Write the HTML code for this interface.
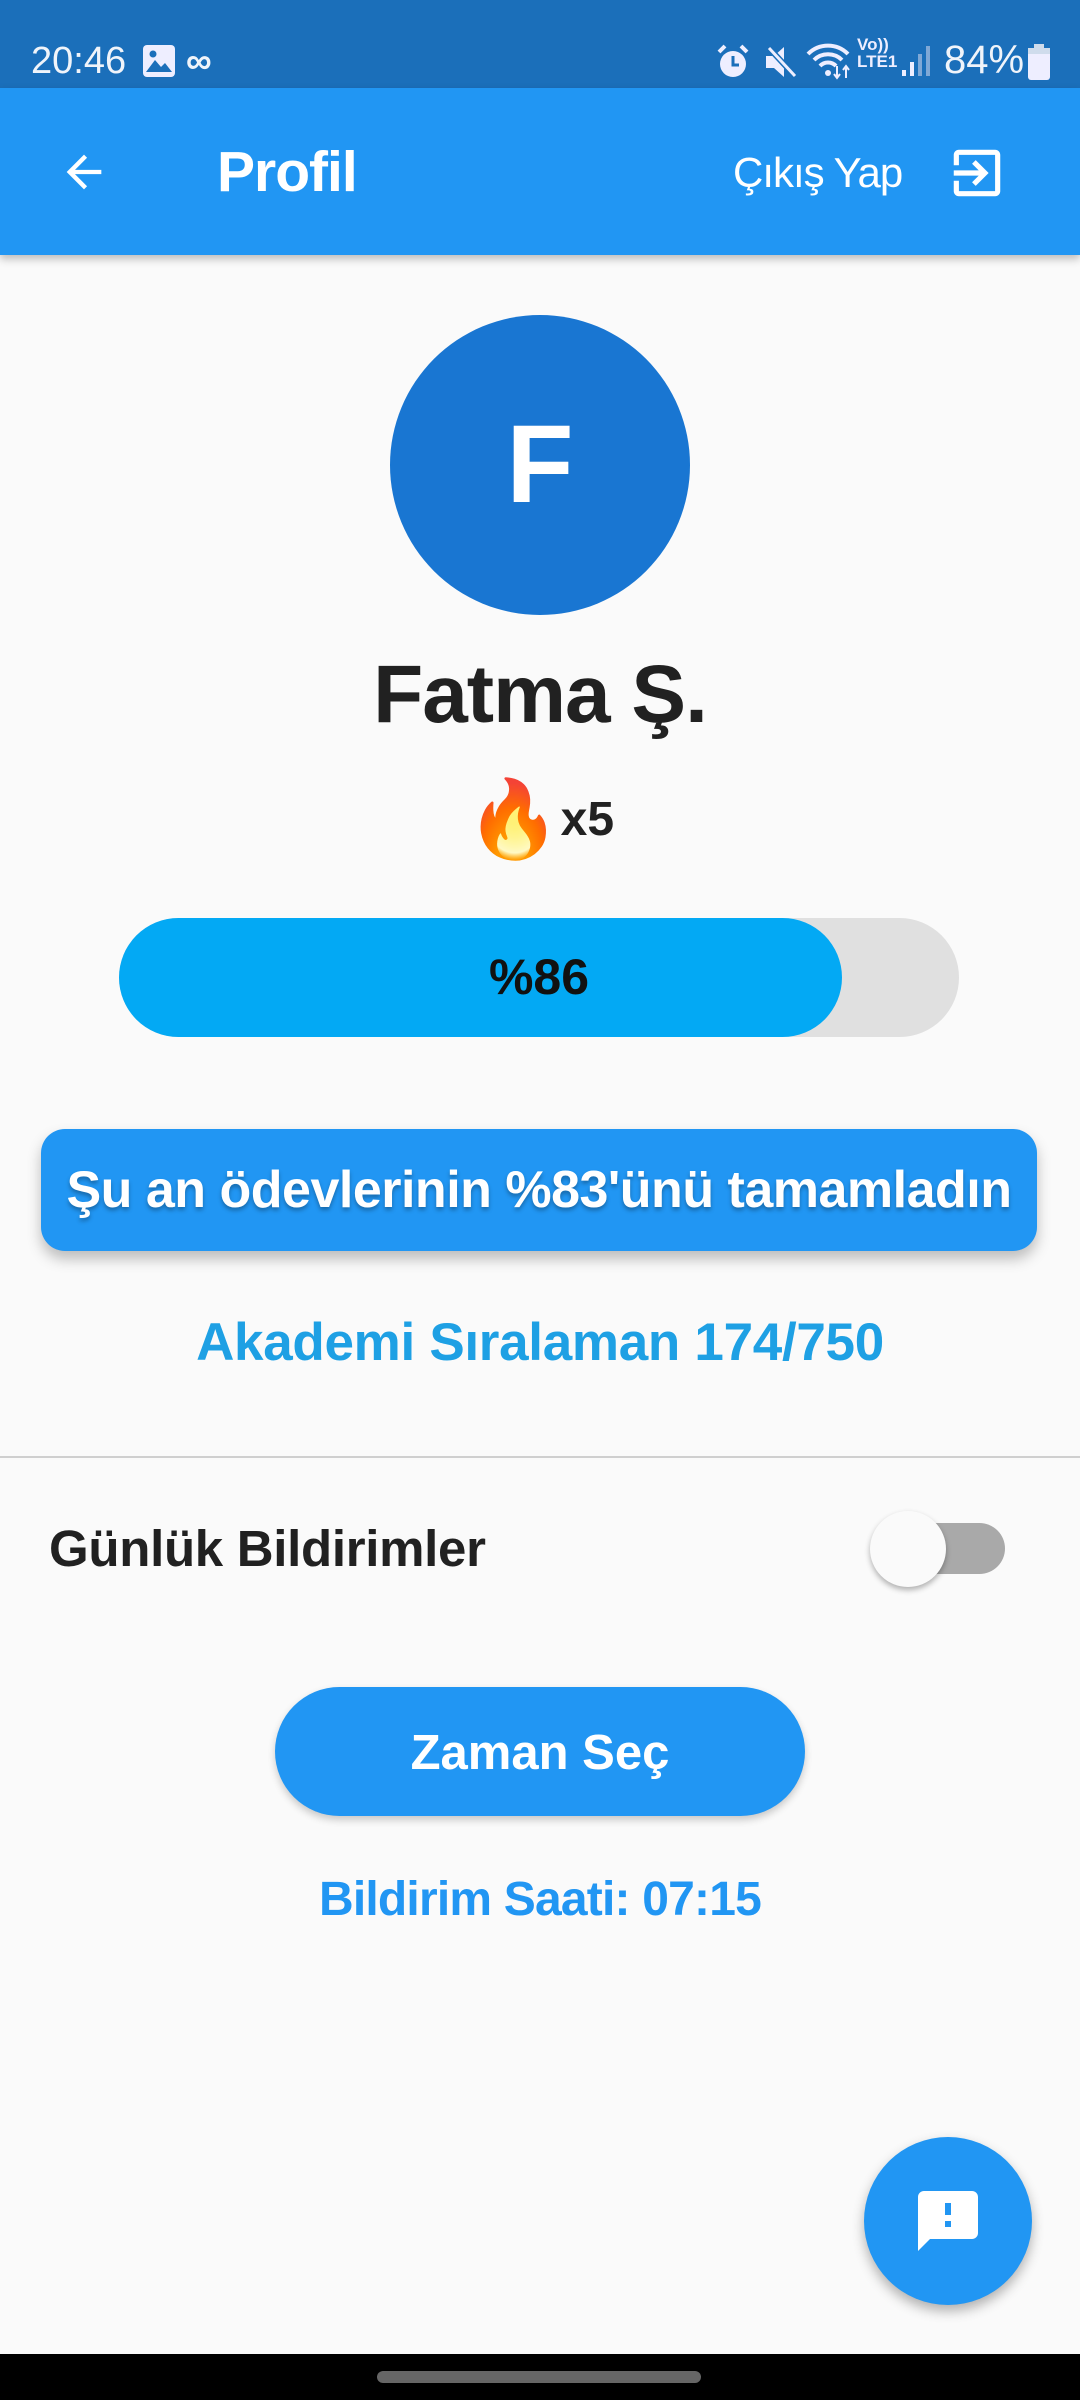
<!DOCTYPE html>
<html><head><meta charset="utf-8"><style>
*{margin:0;padding:0;box-sizing:border-box}
body{width:1080px;height:2400px;background:#fafafa;font-family:"Liberation Sans",sans-serif;position:relative;overflow:hidden}
.a{position:absolute}
.c{position:absolute;left:0;width:1080px;text-align:center}
</style></head><body>
<div class="a" style="left:0;top:0;width:1080px;height:88px;background:#1b6fba"></div>
<div class="a" style="left:31px;top:38px;color:#f0f4fa;font-size:38px;line-height:46px">20:46</div>
<svg class="a" style="left:142px;top:44px" width="34" height="34" viewBox="0 0 34 34"><rect x="1" y="1" width="32" height="32" rx="4" fill="#eef"/><path d="M4 28 L13 16 L19 23 L23 19 L30 28Z" fill="#1b6fba"/><circle cx="11" cy="10" r="3.5" fill="#1b6fba"/></svg>
<div class="a" style="left:186px;top:38px;color:#f0f4fa;font-size:36px;line-height:46px;font-weight:bold">∞</div>
<svg class="a" style="left:716px;top:44px" width="34" height="36" viewBox="0 0 34 36"><circle cx="17" cy="20" r="13" fill="#eef"/><path d="M17 12v9h6" stroke="#1b6fba" stroke-width="3" fill="none"/><path d="M3 8l6-6M31 8l-6-6" stroke="#eef" stroke-width="4"/></svg>
<svg class="a" style="left:763px;top:44px" width="34" height="36" viewBox="0 0 34 36"><path d="M3 12h8l10-9v30l-10-9H3z" fill="#eef"/><path d="M6 4l26 28" stroke="#1b6fba" stroke-width="6"/><path d="M6 4l26 28" stroke="#eef" stroke-width="3"/></svg>
<svg class="a" style="left:806px;top:42px" width="48" height="38" viewBox="0 0 48 38"><path d="M2 12a28 28 0 0 1 40 0M8 18a20 20 0 0 1 28 0M14 24a11 11 0 0 1 16 0" stroke="#eef" stroke-width="4" fill="none"/><circle cx="22" cy="31" r="3" fill="#eef"/><path d="M31 24v12M28 32l3 4 3-4M40 36V24M37 28l3-4 3 4" stroke="#eef" stroke-width="2" fill="none"/></svg>
<div class="a" style="left:857px;top:36px;color:#eef;font-size:17px;line-height:17px;font-weight:bold">Vo))<br>LTE1</div>
<svg class="a" style="left:900px;top:44px" width="32" height="34" viewBox="0 0 32 34"><rect x="2" y="26" width="4" height="6" fill="#eef"/><rect x="10" y="18" width="4" height="14" fill="#eef"/><rect x="18" y="10" width="4" height="22" fill="#7fa8d6"/><rect x="26" y="2" width="4" height="30" fill="#7fa8d6"/></svg>
<div class="a" style="left:944px;top:36px;color:#f0f4fa;font-size:40px;line-height:48px">84%</div>
<svg class="a" style="left:1027px;top:44px" width="24" height="36" viewBox="0 0 24 36"><rect x="7" y="0" width="10" height="4" fill="#cfdcec"/><rect x="1" y="4" width="22" height="32" rx="3" fill="#eef"/><rect x="1" y="4" width="22" height="6" fill="#cfdcec"/></svg>

<div class="a" style="left:0;top:88px;width:1080px;height:167px;background:#2196f3;box-shadow:0 4px 8px rgba(0,0,0,.25)"></div>
<svg class="a" style="left:58px;top:146px" width="52" height="52" viewBox="0 0 24 24"><path d="M20 11H7.83l5.59-5.59L12 4l-8 8 8 8 1.41-1.41L7.83 13H20z" fill="#fff"/></svg>
<div class="a" style="left:217px;top:139px;color:#fff;font-size:57px;line-height:66px;font-weight:bold;letter-spacing:-1px">Profil</div>
<div class="a" style="left:733px;top:148px;color:#fff;font-size:42px;line-height:50px;letter-spacing:-1px">Çıkış Yap</div>
<svg class="a" style="left:946px;top:142px" width="62" height="62" viewBox="0 0 24 24"><path d="M10.09 15.59L11.5 17l5-5-5-5-1.41 1.41L12.67 11H3v2h9.67l-2.58 2.59zM19 3H5c-1.11 0-2 .9-2 2v4h2V5h14v14H5v-4H3v4c0 1.1.89 2 2 2h14c1.1 0 2-.9 2-2V5c0-1.1-.9-2-2-2z" fill="#fff"/></svg>

<div class="a" style="left:390px;top:315px;width:300px;height:300px;border-radius:50%;background:#1976d2"></div>
<div class="c" style="top:405px;color:#fff;font-size:110px;line-height:120px;font-weight:bold">F</div>
<div class="c" style="top:645px;color:#212121;font-size:82px;line-height:100px;font-weight:bold;letter-spacing:-1px">Fatma Ş.</div>
<div class="c" style="top:770px;font-size:48px;line-height:100px;font-weight:bold;color:#212121"><span style="font-size:76px;vertical-align:-10px">🔥</span>x5</div>

<div class="a" style="left:119px;top:918px;width:840px;height:119px;border-radius:60px;background:#e0e0e0"></div>
<div class="a" style="left:119px;top:918px;width:723px;height:119px;border-radius:60px;background:#03a9f4"></div>
<div class="a" style="left:119px;top:918px;width:840px;text-align:center;line-height:119px;font-size:50px;font-weight:bold;color:#111">%86</div>

<div class="a" style="left:41px;top:1129px;width:996px;height:122px;border-radius:24px;background:#2196f3;box-shadow:0 8px 14px rgba(0,0,0,.25)"></div>
<div class="a" style="left:41px;top:1129px;width:996px;text-align:center;line-height:122px;font-size:52px;font-weight:bold;color:#fff;letter-spacing:-0.5px;text-shadow:0 3px 4px rgba(0,0,0,.3)">Şu an ödevlerinin %83'ünü tamamladın</div>

<div class="c" style="top:1312px;line-height:62px;font-size:53px;font-weight:bold;color:#1ea0e4;letter-spacing:-0.3px">Akademi Sıralaman 174/750</div>
<div class="a" style="left:0;top:1456px;width:1080px;height:2px;background:#cfcfcf"></div>

<div class="a" style="left:49px;top:1519px;line-height:60px;font-size:51px;font-weight:bold;color:#212121;letter-spacing:-0.3px">Günlük Bildirimler</div>
<div class="a" style="left:903px;top:1523px;width:102px;height:51px;border-radius:26px;background:#a9a9a9"></div>
<div class="a" style="left:870px;top:1511px;width:76px;height:76px;border-radius:50%;background:#fafafa;box-shadow:0 3px 6px rgba(0,0,0,.3)"></div>

<div class="a" style="left:275px;top:1687px;width:530px;height:129px;border-radius:65px;background:#2196f3;box-shadow:0 4px 8px rgba(0,0,0,.2)"></div>
<div class="a" style="left:275px;top:1691px;width:530px;text-align:center;line-height:125px;font-size:49px;font-weight:bold;color:#fff">Zaman Seç</div>
<div class="c" style="top:1870px;line-height:60px;font-size:48px;font-weight:bold;color:#2196f3;letter-spacing:-0.8px">Bildirim Saati: 07:15</div>

<div class="a" style="left:864px;top:2137px;width:168px;height:168px;border-radius:50%;background:#2196f3;box-shadow:0 6px 12px rgba(0,0,0,.3)"></div>
<svg class="a" style="left:912px;top:2185px" width="72" height="72" viewBox="0 0 24 24"><path d="M20 2H4c-1.1 0-2 .9-2 2v18l4-4h14c1.1 0 2-.9 2-2V4c0-1.1-.9-2-2-2zm-7 12h-2v-2h2v2zm0-4h-2V6h2v4z" fill="#fff"/></svg>

<div class="a" style="left:0;top:2354px;width:1080px;height:46px;background:#000"></div>
<div class="a" style="left:377px;top:2371px;width:324px;height:12px;border-radius:6px;background:#666"></div>
</body></html>
